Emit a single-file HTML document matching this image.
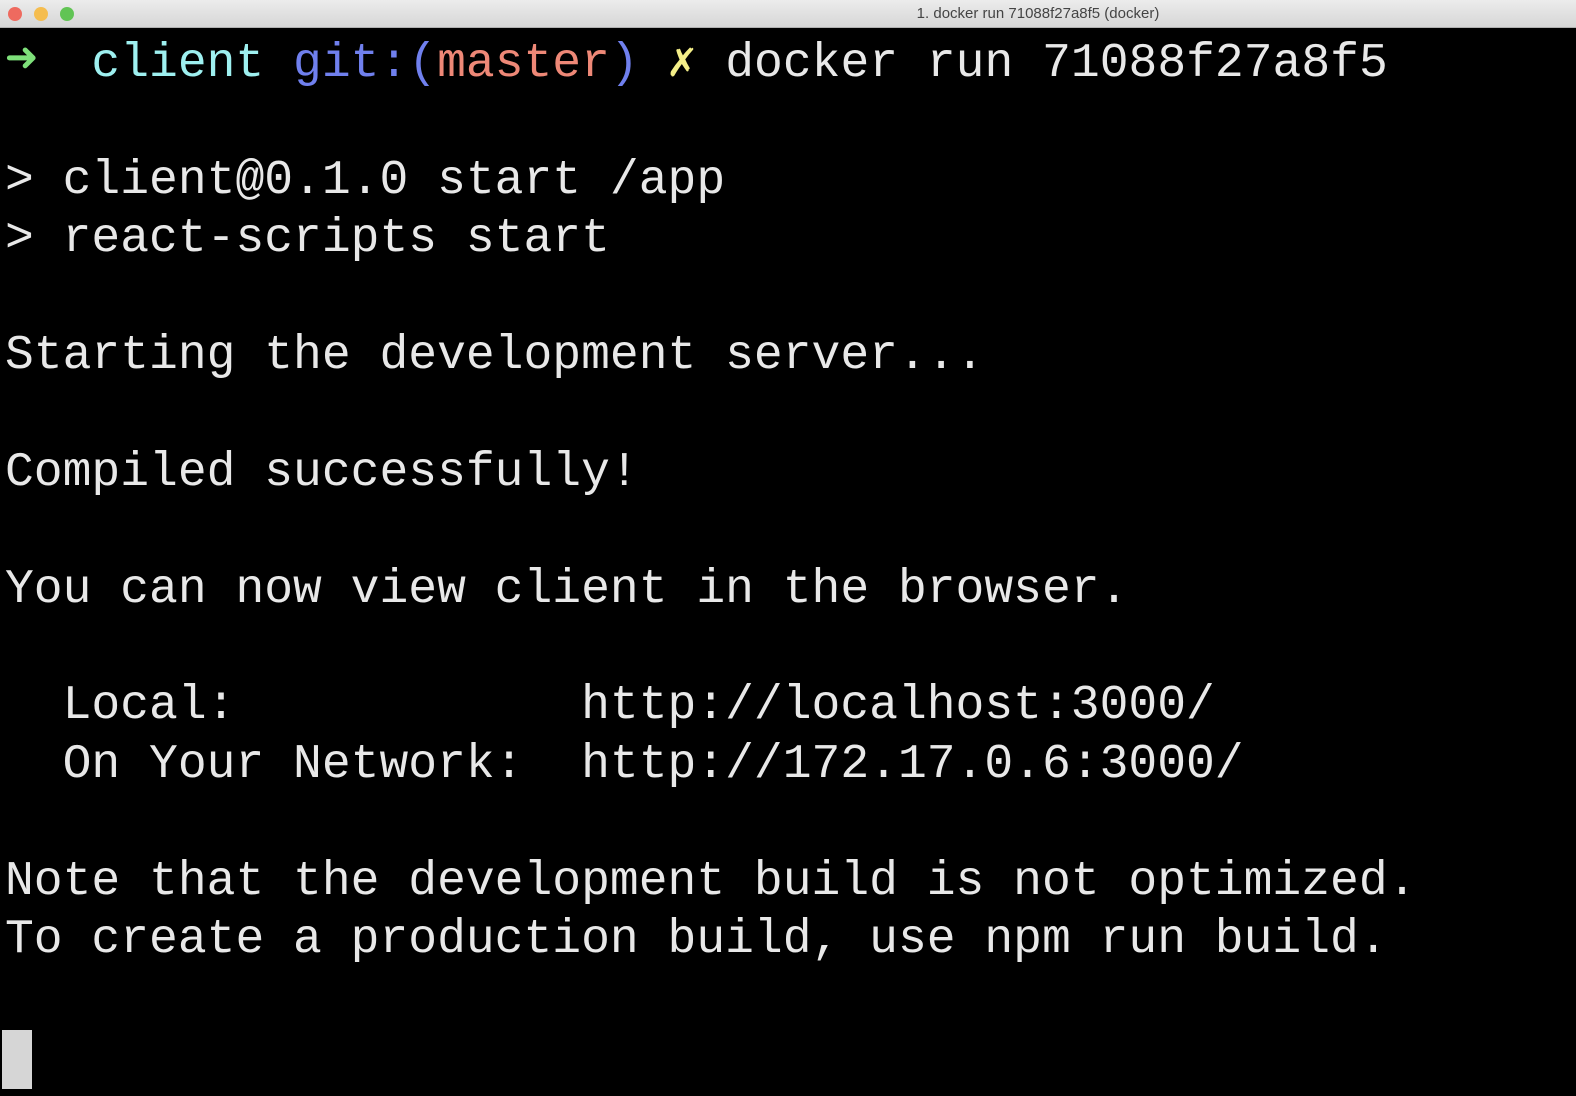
<!DOCTYPE html>
<html><head><meta charset="utf-8"><style>
html,body{margin:0;padding:0;background:#000;width:1576px;height:1096px;overflow:hidden}
.tb{height:28px;background:linear-gradient(#ececec,#d6d6d6);border-bottom:1px solid #b0b0b0;position:relative;box-sizing:border-box}
.dot{position:absolute;top:7px;width:14px;height:14px;border-radius:50%}
.tt{position:absolute;left:0;right:0;top:5px;text-align:center;font:15px "Liberation Sans",sans-serif;color:#444;padding-left:500px}
pre{margin:0;padding:7px 0 0 5px;font:48px/58.4px "Liberation Mono",monospace;color:#e8e8e8}
.g{color:#7ee07a;font-weight:bold;font-size:54px;display:inline-block;width:57.6px;line-height:50px}.c{color:#9ef0f0}.b{color:#7080ee}.r{color:#ee8877}.y{color:#f4ee88}
.cur{position:absolute;left:2px;top:1030px;width:30px;height:59px;background:#d6d6d6}
</style></head><body>
<div class="tb"><div class="dot" style="left:8px;background:#ee6a5f"></div><div class="dot" style="left:34px;background:#f5bd4f"></div><div class="dot" style="left:60px;background:#61c454"></div><div class="tt">1. docker run 71088f27a8f5 (docker)</div></div>
<pre><span class="g">➜</span> <span class="c">client</span> <span class="b">git:(</span><span class="r">master</span><span class="b">)</span> <span class="y">✗</span> docker run 71088f27a8f5

&gt; client@0.1.0 start /app
&gt; react-scripts start

Starting the development server...

Compiled successfully!

You can now view client in the browser.

  Local:            http://localhost:3000/
  On Your Network:  http://172.17.0.6:3000/

Note that the development build is not optimized.
To create a production build, use npm run build.
</pre>
<div class="cur"></div>
</body></html>
